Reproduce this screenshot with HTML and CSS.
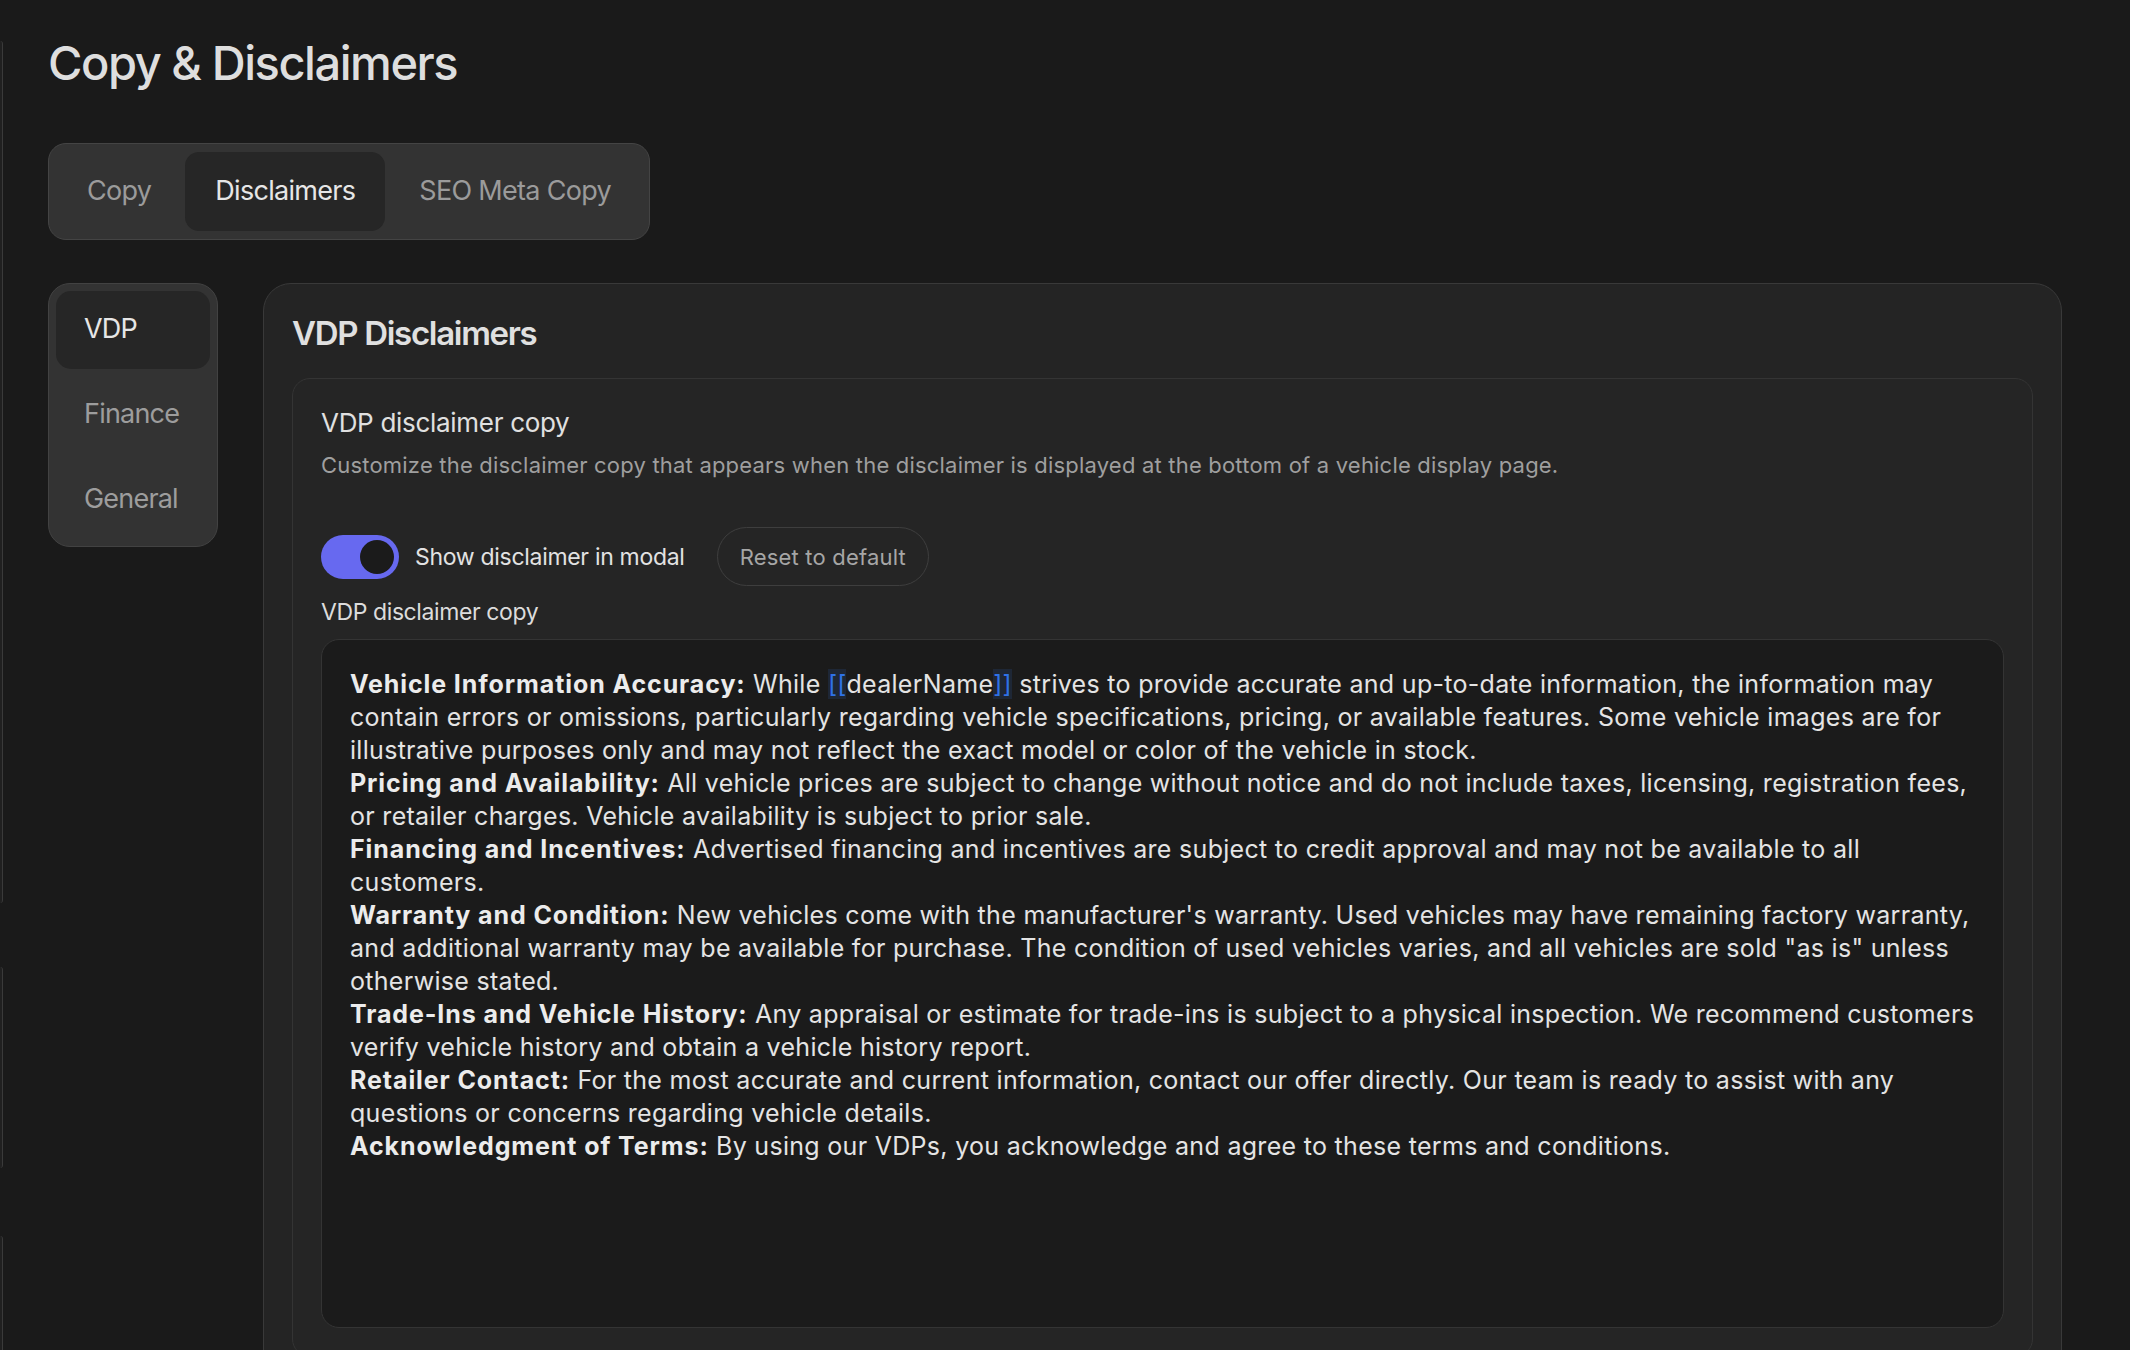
FILE: index.html
```html
<!DOCTYPE html>
<html lang="en">
<head>
    <meta charset="UTF-8">
    <title>Copy &amp; Disclaimers</title>
    <link rel="stylesheet" href="styles.css">
</head>
<body>
<div class="app">
    <div class="rail">
        <div class="rail-box rail-tall"></div>
        <div class="rail-box rail-mid"></div>
        <div class="rail-box rail-low"></div>
    </div>
    <div class="page">
        <h1 class="page-title">Copy &amp; Disclaimers</h1>

        <div class="tabs">
            <div class="tab">Copy</div>
            <div class="tab active">Disclaimers</div>
            <div class="tab">SEO Meta Copy</div>
        </div>

        <div class="layout">
            <ul class="side-nav">
                <li class="active">VDP</li>
                <li>Finance</li>
                <li>General</li>
            </ul>

            <div class="panel">
                <h2 class="panel-title">VDP Disclaimers</h2>
                <div class="card">
                    <div class="card-title">VDP disclaimer copy</div>
                    <div class="card-desc">Customize the disclaimer copy that appears when the disclaimer is displayed at the bottom of a vehicle display page.</div>

                    <div class="controls">
                        <label class="switch">
                            <span class="switch-track"><span class="switch-knob"></span></span>
                            <span class="switch-text">Show disclaimer in modal</span>
                        </label>
                        <button class="btn-reset">Reset to default</button>
                    </div>

                    <div class="field-label">VDP disclaimer copy</div>
                    <div class="editor">
                        <div><b>Vehicle Information Accuracy:</b> While <span class="token"><span class="brk">[[</span>dealerName<span class="brk">]]</span></span> strives to provide accurate and up-to-date information, the information may contain errors or omissions, particularly regarding vehicle specifications, pricing, or available features. Some vehicle images are for illustrative purposes only and may not reflect the exact model or color of the vehicle in stock.</div>
                        <div><b>Pricing and Availability:</b> All vehicle prices are subject to change without notice and do not include taxes, licensing, registration fees, or retailer charges. Vehicle availability is subject to prior sale.</div>
                        <div><b>Financing and Incentives:</b> Advertised financing and incentives are subject to credit approval and may not be available to all customers.</div>
                        <div><b>Warranty and Condition:</b> New vehicles come with the manufacturer's warranty. Used vehicles may have remaining factory warranty, and additional warranty may be available for purchase. The condition of used vehicles varies, and all vehicles are sold "as is" unless otherwise stated.</div>
                        <div><b>Trade-Ins and Vehicle History:</b> Any appraisal or estimate for trade-ins is subject to a physical inspection. We recommend customers verify vehicle history and obtain a vehicle history report.</div>
                        <div><b>Retailer Contact:</b> For the most accurate and current information, contact our offer directly. Our team is ready to assist with any questions or concerns regarding vehicle details.</div>
                        <div><b>Acknowledgment of Terms:</b> By using our VDPs, you acknowledge and agree to these terms and conditions.</div>
                    </div>
                </div>
            </div>
        </div>
    </div>
</div>
</body>
</html>
```

FILE: styles.css
```css
* {
    margin: 0;
    padding: 0;
    box-sizing: border-box;
}
html, body {
    height: 100%;
    overflow: hidden;
}
body {
    background-color: #1a1a1a;
    color: #e2e2e2;
    font-family: Inter, Lato, "Noto Sans", sans-serif;
}
.app {
    display: flex;
}

/* left edge of the collapsed sidebar */
.rail {
    width: 3px;
    padding-top: 41px;
    display: flex;
    flex-direction: column;
}
.rail-box {
    width: 3px;
    background-color: #202020;
    border-right: 1px solid #3a3a3a;
    border-radius: 0 6px 6px 0;
}
.rail-tall {
    height: 862px;
}
.rail-mid {
    height: 201px;
    margin-top: 64px;
}
.rail-low {
    height: 200px;
    margin-top: 68px;
}

.page {
    flex: 1;
    padding: 34px 68px 0 45px;
}
.page-title {
    font-size: 47px;
    line-height: 58px;
    font-weight: 500;
    letter-spacing: -1.45px;
    color: #dedede;
}

/* tabs */
.tabs {
    display: inline-flex;
    gap: 4px;
    margin-top: 51px;
    padding: 8px;
    background-color: #333333;
    border: 1px solid #444444;
    border-radius: 18px;
}
.tab {
    height: 79px;
    padding: 0 30px 2px;
    display: flex;
    align-items: center;
    font-size: 27px;
    letter-spacing: -0.7px;
    color: #9b9b9b;
    border-radius: 14px;
}
.tab.active {
    background-color: #262626;
    color: #e6e6e6;
}

.layout {
    display: flex;
    align-items: flex-start;
    gap: 45px;
    margin-top: 43px;
}

/* side nav */
.side-nav {
    width: 170px;
    flex: none;
    list-style: none;
    padding: 7px;
    display: flex;
    flex-direction: column;
    gap: 7px;
    background-color: #333333;
    border: 1px solid #424242;
    border-radius: 22px;
}
.side-nav li {
    height: 78px;
    padding: 0 28px 4px;
    display: flex;
    align-items: center;
    font-size: 27px;
    letter-spacing: -0.8px;
    color: #9d9d9d;
    border-radius: 15px;
}
.side-nav li.active {
    background-color: #262626;
    color: #e6e6e6;
}

/* main panel */
.panel {
    flex: 1;
    padding: 29px 28px 28px;
    background-color: #242424;
    border: 1px solid #393939;
    border-radius: 28px;
}
.panel-title {
    font-size: 33px;
    line-height: 40px;
    font-weight: 600;
    letter-spacing: -1.3px;
    color: #e0e0e0;
}
.card {
    margin-top: 25px;
    padding: 28px;
    background-color: #252525;
    border: 1px solid #343434;
    border-radius: 18px;
}
.card-title {
    font-size: 26px;
    line-height: 32px;
    letter-spacing: -0.3px;
    color: #e0e0e0;
}
.card-desc {
    margin-top: 12px;
    font-size: 22px;
    line-height: 28px;
    letter-spacing: 0.2px;
    color: #9f9f9f;
}

.controls {
    display: flex;
    align-items: center;
    gap: 32px;
    margin-top: 48px;
}
.switch {
    display: flex;
    align-items: center;
    gap: 16px;
}
.switch-track {
    width: 78px;
    height: 44px;
    padding: 5px;
    display: flex;
    justify-content: flex-end;
    background-color: #6769f0;
    border-radius: 22px;
}
.switch-knob {
    width: 34px;
    height: 34px;
    background-color: #1b1b1b;
    border-radius: 50%;
}
.switch-text {
    font-size: 23px;
    letter-spacing: -0.3px;
    color: #e2e2e2;
}
.btn-reset {
    height: 59px;
    padding: 0 22px;
    font-family: inherit;
    font-size: 22px;
    letter-spacing: 0.2px;
    color: #a6a6a6;
    background: transparent;
    border: 1px solid #3e3e3e;
    border-radius: 30px;
}

.field-label {
    margin-top: 12px;
    font-size: 23px;
    line-height: 28px;
    letter-spacing: -0.4px;
    color: #dcdcdc;
}
.editor {
    margin-top: 13px;
    height: 689px;
    padding: 28px;
    background-color: #1b1b1b;
    border: 1px solid #343434;
    border-radius: 18px;
    font-size: 25px;
    line-height: 33px;
    letter-spacing: 0.3px;
    color: #e4e4e4;
}
.editor b {
    font-weight: 700;
    letter-spacing: 0.9px;
    color: #ececec;
}
.token .brk {
    color: #2f72e6;
    background-color: #1e2736;
}
```
